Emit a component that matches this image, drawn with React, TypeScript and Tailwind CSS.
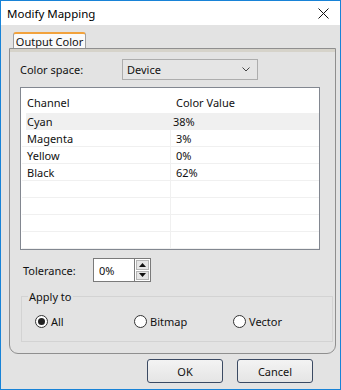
import { useState } from "react";

type Row = { channel: string; value: string };

const rows: Row[] = [
  { channel: "Cyan", value: "38%" },
  { channel: "Magenta", value: "3%" },
  { channel: "Yellow", value: "0%" },
  { channel: "Black", value: "62%" },
  { channel: "", value: "" },
  { channel: "", value: "" },
  { channel: "", value: "" },
  { channel: "", value: "" },
];

const font = "font-['Noto_Sans',sans-serif]";

function Radio({ label, checked, onClick }: { label: string; checked: boolean; onClick: () => void }) {
  return (
    <button type="button" onClick={onClick} className="w-[99px] flex items-center gap-[3px] text-left">
      <span className="w-[13px] h-[13px] rounded-full border border-[#333] bg-white flex items-center justify-center shrink-0">
        {checked && <span className="w-[7px] h-[7px] rounded-full bg-[#222]" />}
      </span>
      <span>{label}</span>
    </button>
  );
}

export default function App() {
  const [applyTo, setApplyTo] = useState("All");

  return (
    <div className={`w-[341px] h-[390px] border border-[#1883d7] bg-[#e3e3e3] flex flex-col text-[11px] leading-[15px] text-[#111] ${font}`}>
      {/* title bar */}
      <div className="h-[24px] bg-white flex items-center justify-between pl-[6px] pr-[11px] shrink-0">
        <span className="text-[11.5px] text-black">Modify Mapping</span>
        <svg width="11" height="11" viewBox="0 0 11 11">
          <path d="M0.5 0.5 L10.5 10.5 M10.5 0.5 L0.5 10.5" stroke="#111" strokeWidth="1" />
        </svg>
      </div>

      <div className="flex flex-col pl-[8px] pr-[4px] pt-[7px]">
        {/* tab */}
        <div className="h-[16px] flex">
          <div className="ml-[4px] w-[73px] h-[16px] bg-[#fafafa] border-x border-t-2 border-x-[#a0a0a0] border-t-[#f2a23c] rounded-t-[3px] flex items-center justify-center">
            Output Color
          </div>
        </div>

        {/* panel */}
        <div className="h-[306px] border border-[#8f8f8f] rounded-b-[9px] flex flex-col">
          <div className="h-[3px] bg-[#d6d3ca]" />

          <div className="mt-[7px] h-[21px] flex items-center pl-[10px]">
            <span className="w-[102px]">Color space:</span>
            <div className="w-[136px] h-[21px] border border-[#adadad] bg-[#e5e5e5] flex items-center justify-between pl-[4px] pr-[7px]">
              <span>Device</span>
              <svg width="8" height="5" viewBox="0 0 8 5">
                <path d="M0.5 0.5 L4 4 L7.5 0.5" stroke="#444" strokeWidth="1" fill="none" />
              </svg>
            </div>
          </div>

          <div className="mt-[7px] ml-[10px] w-[300px] h-[163px] border border-[#828790] bg-white overflow-hidden">
            <div className="h-[25px] flex pt-[7px]">
              <span className="w-[149px] pl-[6px]">Channel</span>
              <span className="pl-[6px]">Color Value</span>
            </div>
            {rows.map((r, i) => (
              <div
                key={i}
                className={`h-[17px] flex border-b border-[#f0f0f0] ${i === 0 ? "bg-[#f0f0f0] ml-[5px]" : "ml-[1px]"}`}
              >
                <span className={`${i === 0 ? "w-[144px] pl-[1px]" : "w-[148px] pl-[5px]"} flex items-center`}>{r.channel}</span>
                <span className={`flex-1 flex items-center border-l border-[#f0f0f0] ${i === 0 ? "pl-[2px]" : "pl-[5px]"}`}>
                  {r.value}
                </span>
              </div>
            ))}
          </div>

          <div className="mt-[8px] h-[24px] flex items-center pl-[13px]">
            <span className="w-[70px]">Tolerance:</span>
            <div className="h-[24px] w-[42px] border border-[#7a7a7a] bg-white flex items-center pl-[5px]">0%</div>
            <div className="h-[24px] w-[16px] border-y border-r border-[#7a7a7a] bg-white flex flex-col p-[1px] gap-[1px]">
              <div className="flex-1 bg-[#e6e6e6] border border-[#b5b5b5] flex items-center justify-center">
                <svg width="7" height="4" viewBox="0 0 7 4"><path d="M3.5 0 L7 4 L0 4 Z" fill="#111" /></svg>
              </div>
              <div className="flex-1 bg-[#e6e6e6] border border-[#b5b5b5] flex items-center justify-center">
                <svg width="7" height="4" viewBox="0 0 7 4"><path d="M0 0 L7 0 L3.5 4 Z" fill="#111" /></svg>
              </div>
            </div>
          </div>

          <fieldset className="mt-[7px] ml-[11px] w-[302px] h-[53px] border border-[#d3d3d3] px-0">
            <legend className="ml-[6px] px-[1px]">Apply to</legend>
            <div className="mt-[10px] pl-[13px] flex">
              {["All", "Bitmap", "Vector"].map((l) => (
                <Radio key={l} label={l} checked={applyTo === l} onClick={() => setApplyTo(l)} />
              ))}
            </div>
          </fieldset>
        </div>

        {/* buttons */}
        <div className="mt-[5px] h-[24px] flex justify-end gap-[14px] pr-[23px]">
          <button className="w-[76px] h-[24px] border border-[#3b4a63] rounded-[3px] bg-gradient-to-b from-[#f3f3f3] to-[#e5e5e5]">OK</button>
          <button className="w-[76px] h-[24px] border border-[#3b4a63] rounded-[3px] bg-gradient-to-b from-[#f3f3f3] to-[#e5e5e5]">Cancel</button>
        </div>
      </div>
    </div>
  );
}
